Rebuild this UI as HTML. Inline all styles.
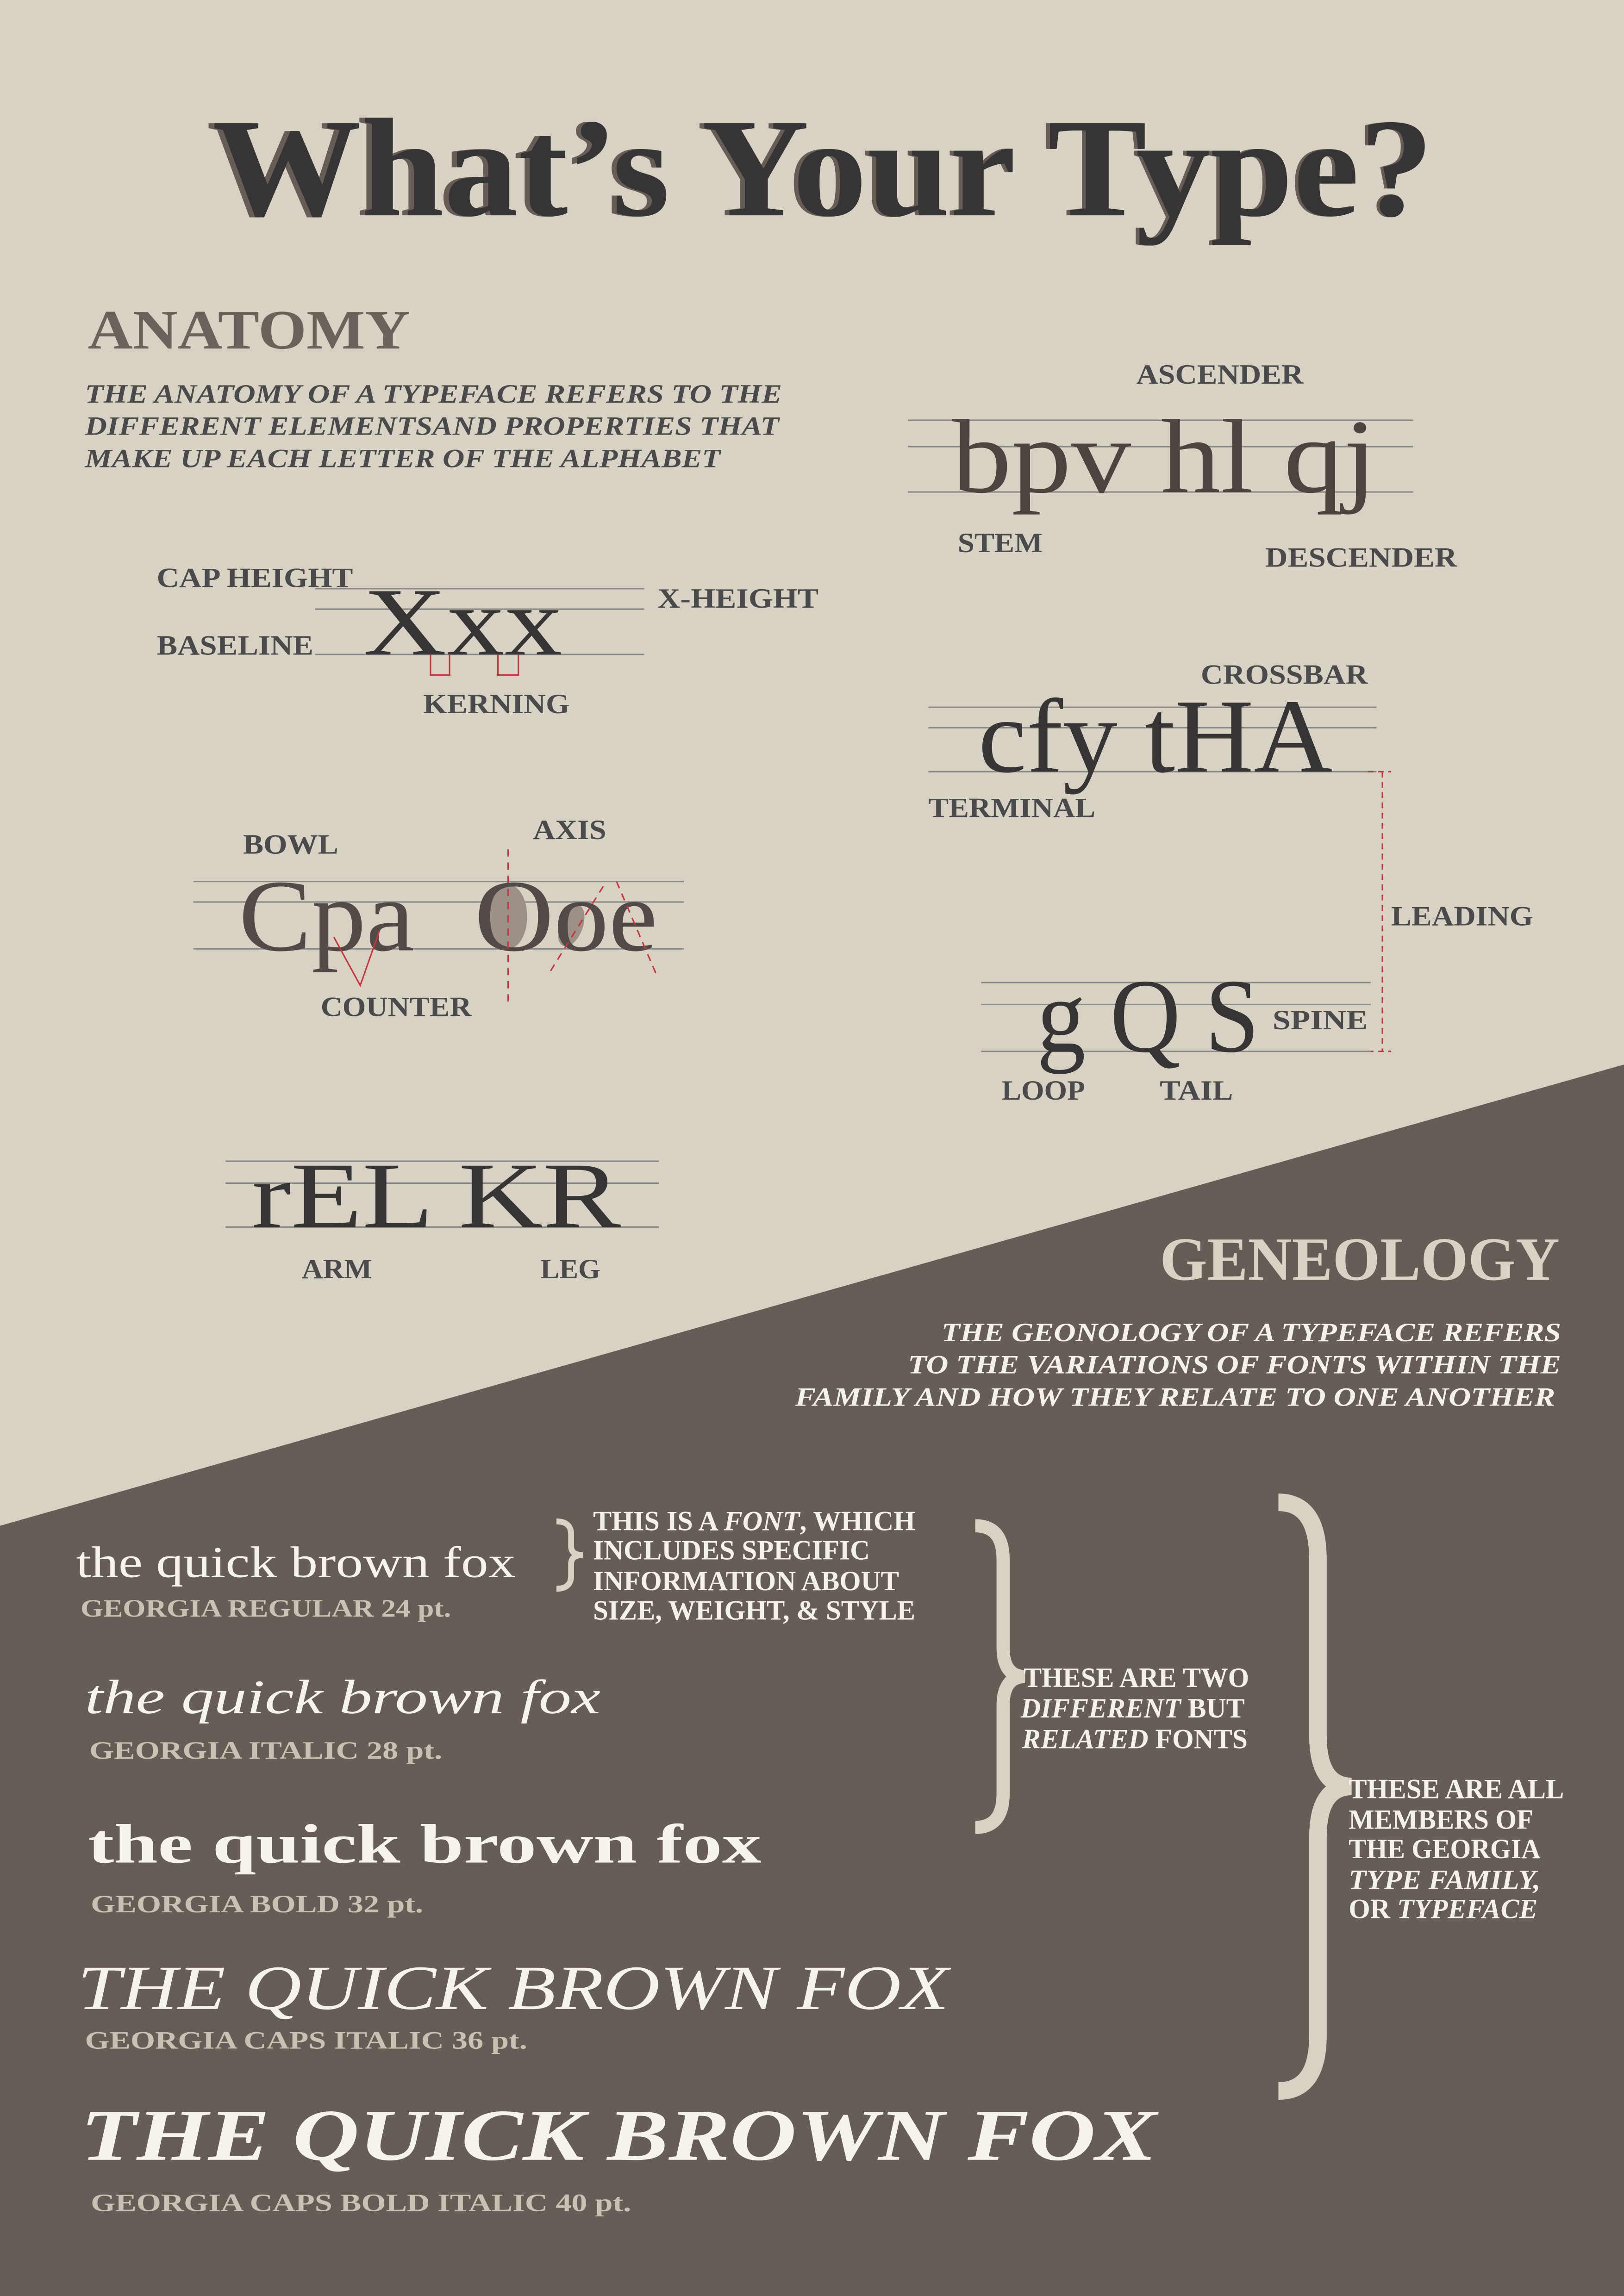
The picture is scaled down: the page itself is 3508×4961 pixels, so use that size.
<!DOCTYPE html>
<html><head><meta charset="utf-8"><style>
html,body{margin:0;padding:0;background:#d8d2c4;}
svg{display:block;}
text{font-family:"Liberation Serif",serif;}
.lb{font-weight:bold;font-size:19px;fill:#4a4a4c;}
.ln{stroke:#8a8886;stroke-width:1;}
.wt{font-weight:bold;font-size:19px;fill:#f4f0ea;}
.gl{font-weight:bold;font-size:17px;fill:#c9c1b4;}
</style></head><body>
<svg width="3508" height="4961" viewBox="0 0 1109 1568" preserveAspectRatio="none" xmlns="http://www.w3.org/2000/svg">
<rect width="1109" height="1568" fill="#d8d2c4"/>
<polygon points="0,1042 1109,727 1109,1568 0,1568" fill="#675d57"/>

<text x="141" y="147" font-size="96" font-weight="bold" fill="#675d57" textLength="836" lengthAdjust="spacingAndGlyphs">What’s Your Type?</text>
<text x="145" y="147" font-size="96" font-weight="bold" fill="#373435" textLength="834" lengthAdjust="spacingAndGlyphs">What’s Your Type?</text>

<text x="60" y="238" font-size="38" font-weight="bold" fill="#6b625c" textLength="220" lengthAdjust="spacingAndGlyphs">ANATOMY</text>
<g font-size="18" font-weight="bold" font-style="italic" fill="#4a4a4c">
<text x="58" y="275" textLength="476" lengthAdjust="spacingAndGlyphs">THE ANATOMY OF A TYPEFACE REFERS TO THE</text>
<text x="58" y="297" textLength="474" lengthAdjust="spacingAndGlyphs">DIFFERENT ELEMENTSAND PROPERTIES THAT</text>
<text x="58" y="319" textLength="434" lengthAdjust="spacingAndGlyphs">MAKE UP EACH LETTER OF THE ALPHABET</text>
</g>

<text class="lb" x="776" y="262" textLength="114" lengthAdjust="spacingAndGlyphs">ASCENDER</text>
<line class="ln" x1="620" y1="287" x2="965" y2="287"/>
<line class="ln" x1="620" y1="305" x2="965" y2="305"/>
<line class="ln" x1="620" y1="336" x2="965" y2="336"/>
<text x="650" y="336" font-size="72" fill="#4d4440" textLength="290" lengthAdjust="spacingAndGlyphs">bpv hl qj</text>
<text class="lb" x="654" y="377" textLength="58" lengthAdjust="spacingAndGlyphs">STEM</text>
<text class="lb" x="864" y="387" textLength="131" lengthAdjust="spacingAndGlyphs">DESCENDER</text>

<text class="lb" x="107" y="401" textLength="134" lengthAdjust="spacingAndGlyphs">CAP HEIGHT</text>
<text class="lb" x="449" y="415" textLength="110" lengthAdjust="spacingAndGlyphs">X-HEIGHT</text>
<text class="lb" x="107" y="447" textLength="107" lengthAdjust="spacingAndGlyphs">BASELINE</text>
<line class="ln" x1="215" y1="402" x2="440" y2="402"/>
<line class="ln" x1="215" y1="416" x2="440" y2="416"/>
<line class="ln" x1="215" y1="447" x2="440" y2="447"/>
<text x="248" y="447" font-size="66" fill="#373435" textLength="136" lengthAdjust="spacingAndGlyphs">Xxx</text>
<path d="M294 447 V461 H307 V447 M340 447 V461 H354 V447" fill="none" stroke="#c8343e" stroke-width="1"/>
<text class="lb" x="289" y="487" textLength="100" lengthAdjust="spacingAndGlyphs">KERNING</text>

<text class="lb" x="820" y="467" textLength="114" lengthAdjust="spacingAndGlyphs">CROSSBAR</text>
<line class="ln" x1="634" y1="483" x2="940" y2="483"/>
<line class="ln" x1="634" y1="497" x2="940" y2="497"/>
<line class="ln" x1="634" y1="527" x2="940" y2="527"/>
<text x="668" y="527" font-size="72" fill="#373435" textLength="242" lengthAdjust="spacingAndGlyphs">cfy tHA</text>
<text class="lb" x="634" y="558" textLength="114" lengthAdjust="spacingAndGlyphs">TERMINAL</text>
<path d="M934 527 H950 M944 527 V718 M934 718 H950" fill="none" stroke="#c8343e" stroke-width="1" stroke-dasharray="4,3"/>
<text class="lb" x="950" y="632" textLength="97" lengthAdjust="spacingAndGlyphs">LEADING</text>

<text class="lb" x="166" y="583" textLength="65" lengthAdjust="spacingAndGlyphs">BOWL</text>
<text class="lb" x="364" y="573" textLength="50" lengthAdjust="spacingAndGlyphs">AXIS</text>
<line class="ln" x1="132" y1="602" x2="467" y2="602"/>
<line class="ln" x1="132" y1="616" x2="467" y2="616"/>
<line class="ln" x1="132" y1="648" x2="467" y2="648"/>
<ellipse cx="347" cy="626" rx="13" ry="22" fill="#9c9087"/>
<ellipse cx="390" cy="632" rx="8" ry="15" fill="#9c9087" transform="rotate(20 390 632)"/>
<text x="163" y="649" font-size="70" fill="#524a46" textLength="120" lengthAdjust="spacingAndGlyphs">Cpa</text>
<text x="324" y="649" font-size="70" fill="#524a46" textLength="125" lengthAdjust="spacingAndGlyphs">Ooe</text>
<path d="M228 640 L246 673 L259 636" fill="none" stroke="#c8343e" stroke-width="1"/>
<path d="M347 580 V685 M376 663 L414 602 M421 602 L448 665" fill="none" stroke="#c8343e" stroke-width="1" stroke-dasharray="5,4"/>
<text class="lb" x="219" y="694" textLength="103" lengthAdjust="spacingAndGlyphs">COUNTER</text>

<line class="ln" x1="670" y1="671" x2="936" y2="671"/>
<line class="ln" x1="670" y1="686" x2="936" y2="686"/>
<line class="ln" x1="670" y1="718" x2="936" y2="718"/>
<text x="708" y="718" font-size="72" fill="#373435" textLength="152" lengthAdjust="spacingAndGlyphs">g Q S</text>
<text class="lb" x="869" y="703" textLength="65" lengthAdjust="spacingAndGlyphs">SPINE</text>
<text class="lb" x="684" y="751" textLength="57" lengthAdjust="spacingAndGlyphs">LOOP</text>
<text class="lb" x="792" y="751" textLength="50" lengthAdjust="spacingAndGlyphs">TAIL</text>

<line class="ln" x1="154" y1="793" x2="450" y2="793"/>
<line class="ln" x1="154" y1="808" x2="450" y2="808"/>
<line class="ln" x1="154" y1="838" x2="450" y2="838"/>
<text x="172" y="838" font-size="64" fill="#373435" textLength="252" lengthAdjust="spacingAndGlyphs">rEL KR</text>
<text class="lb" x="206" y="873" textLength="48" lengthAdjust="spacingAndGlyphs">ARM</text>
<text class="lb" x="369" y="873" textLength="41" lengthAdjust="spacingAndGlyphs">LEG</text>

<text x="792" y="874" font-size="42" font-weight="bold" fill="#d8d2c4" textLength="273" lengthAdjust="spacingAndGlyphs">GENEOLOGY</text>
<g font-size="18" font-weight="bold" font-style="italic" fill="#f4f0ea">
<text x="643" y="916" textLength="423" lengthAdjust="spacingAndGlyphs">THE GEONOLOGY OF A TYPEFACE REFERS</text>
<text x="620" y="938" textLength="446" lengthAdjust="spacingAndGlyphs">TO THE VARIATIONS OF FONTS WITHIN THE</text>
<text x="543" y="960" textLength="519" lengthAdjust="spacingAndGlyphs">FAMILY AND HOW THEY RELATE TO ONE ANOTHER</text>
</g>

<g fill="#f6f2ec">
<text x="52" y="1077" font-size="30" textLength="300" lengthAdjust="spacingAndGlyphs">the quick brown fox</text>
<text x="58" y="1170" font-size="33" font-style="italic" textLength="352" lengthAdjust="spacingAndGlyphs">the quick brown fox</text>
<text x="60" y="1272" font-size="38" font-weight="bold" textLength="460" lengthAdjust="spacingAndGlyphs">the quick brown fox</text>
<text x="53" y="1372" font-size="43" font-style="italic" textLength="595" lengthAdjust="spacingAndGlyphs">THE QUICK BROWN FOX</text>
<text x="55" y="1475" font-size="50" font-weight="bold" font-style="italic" textLength="735" lengthAdjust="spacingAndGlyphs">THE QUICK BROWN FOX</text>
</g>
<text class="gl" x="55" y="1104" textLength="253" lengthAdjust="spacingAndGlyphs">GEORGIA REGULAR 24 pt.</text>
<text class="gl" x="61" y="1201" textLength="241" lengthAdjust="spacingAndGlyphs">GEORGIA ITALIC 28 pt.</text>
<text class="gl" x="62" y="1306" textLength="227" lengthAdjust="spacingAndGlyphs">GEORGIA BOLD 32 pt.</text>
<text class="gl" x="58" y="1399" textLength="302" lengthAdjust="spacingAndGlyphs">GEORGIA CAPS ITALIC 36 pt.</text>
<text class="gl" x="62" y="1510" textLength="369" lengthAdjust="spacingAndGlyphs">GEORGIA CAPS BOLD ITALIC 40 pt.</text>

<g fill="none" stroke="#d8d2c4" stroke-linecap="butt">
<path d="M380 1039 Q390 1039 390 1048 V1056 Q390 1062 398 1062 Q390 1062 390 1068 V1076 Q390 1085 380 1085" stroke-width="4"/>
<path d="M666 1042 Q685 1042 685 1065 V1125 Q685 1145 700 1145 Q685 1145 685 1165 V1225 Q685 1248 666 1248" stroke-width="9"/>
<path d="M873 1026 Q900 1026 900 1065 V1185 Q900 1220 923 1220 Q900 1220 900 1255 V1390 Q900 1428 873 1428" stroke-width="12"/>
</g>

<text class="wt" x="405" y="1045" textLength="220" lengthAdjust="spacingAndGlyphs">THIS IS A <tspan font-style="italic">FONT</tspan>, WHICH</text>
<text class="wt" x="405" y="1065" textLength="189" lengthAdjust="spacingAndGlyphs">INCLUDES SPECIFIC</text>
<text class="wt" x="405" y="1086" textLength="209" lengthAdjust="spacingAndGlyphs">INFORMATION ABOUT</text>
<text class="wt" x="405" y="1106" textLength="220" lengthAdjust="spacingAndGlyphs">SIZE, WEIGHT, &amp; STYLE</text>
<text class="wt" x="699" y="1152" textLength="154" lengthAdjust="spacingAndGlyphs">THESE ARE TWO</text>
<text class="wt" x="697" y="1173" textLength="153" lengthAdjust="spacingAndGlyphs"><tspan font-style="italic">DIFFERENT</tspan> BUT</text>
<text class="wt" x="698" y="1194" textLength="154" lengthAdjust="spacingAndGlyphs"><tspan font-style="italic">RELATED</tspan> FONTS</text>
<text class="wt" x="921" y="1228" textLength="147" lengthAdjust="spacingAndGlyphs">THESE ARE ALL</text>
<text class="wt" x="921" y="1249" textLength="126" lengthAdjust="spacingAndGlyphs">MEMBERS OF</text>
<text class="wt" x="921" y="1269" textLength="131" lengthAdjust="spacingAndGlyphs">THE GEORGIA</text>
<text class="wt" x="921" y="1290" font-style="italic" textLength="131" lengthAdjust="spacingAndGlyphs">TYPE FAMILY,</text>
<text class="wt" x="921" y="1310" textLength="129" lengthAdjust="spacingAndGlyphs">OR <tspan font-style="italic">TYPEFACE</tspan></text>
</svg>
</body></html>
